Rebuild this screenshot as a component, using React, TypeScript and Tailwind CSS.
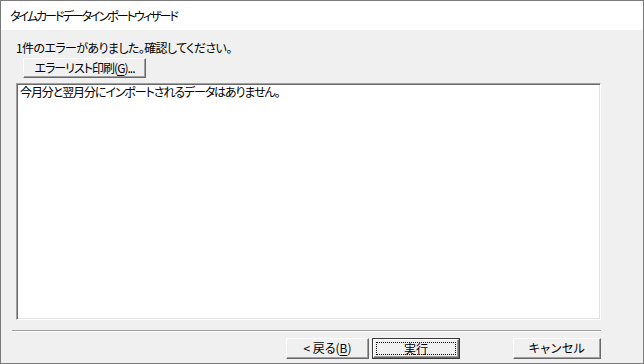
import React from "react";

const font = "font-['Noto_Sans_CJK_JP','Noto_Sans',sans-serif] [font-feature-settings:'palt']";

function Btn({
  children,
  className = "",
  def = false,
}: {
  children: React.ReactNode;
  className?: string;
  def?: boolean;
}) {
  if (def) {
    return (
      <div className={`border border-[#3a3a3a] ${className}`}>
        <div className="h-full w-full border border-t-white border-l-white border-r-[#696969] border-b-[#696969] bg-[#f0f0f0] shadow-[inset_-1px_-1px_0_#a0a0a0] p-[2px]">
          <div className="flex h-full w-full items-center justify-center border border-dotted border-black text-[12px] leading-none text-black">
            {children}
          </div>
        </div>
      </div>
    );
  }
  return (
    <div
      className={`flex items-center justify-center border border-t-white border-l-white border-r-[#696969] border-b-[#696969] bg-[#f0f0f0] shadow-[inset_-1px_-1px_0_#a0a0a0] text-[12px] leading-none text-black ${className}`}
    >
      {children}
    </div>
  );
}

export default function App() {
  return (
    <div className={`flex h-[364px] w-[644px] flex-col border border-[#7a7a7a] bg-[#f0f0f0] text-black ${font}`}>
      <div className="flex h-[29px] shrink-0 items-center bg-white pl-[9px] text-[12px] leading-none tracking-[-2px]">
        タイムカードデータインポートウィザード
      </div>
      <div className="flex flex-1 flex-col pl-[15px] pt-[10px]">
        <div className="h-[16px] text-[12px] leading-[16px] tracking-[-0.6px]">
          1件のエラーがありました。確認してください。
        </div>
        <Btn className="ml-[7px] mt-[2px] h-[20px] w-[123px] pb-[1px] tracking-[-1px]">
          エラーリスト印刷(<span className="underline underline-offset-2">G</span>)...
        </Btn>
        <div className="mt-[5px] h-[237px] w-[585px] border border-t-[#a0a0a0] border-l-[#a0a0a0] border-r-white border-b-white bg-white shadow-[inset_1px_1px_0_#696969,inset_-1px_-1px_0_#e3e3e3] pl-[3px]">
          <div className="text-[12px] leading-[16px] tracking-[-1.1px]">
            今月分と翌月分にインポートされるデータはありません。
          </div>
        </div>
        <div className="ml-[-4px] mt-[10px] h-[2px] w-[589px] border-t border-t-[#a0a0a0] border-b border-b-white" />
        <div className="mt-[6px] flex h-[21px]">
          <Btn className="ml-[270px] w-[83px] pb-[1px]">
            &lt; 戻る(<span className="underline underline-offset-2">B</span>)
          </Btn>
          <Btn def className="ml-[3px] w-[88px]">
            実行
          </Btn>
          <Btn className="ml-[53px] w-[88px] pb-[1px] tracking-[0.5px]">キャンセル</Btn>
        </div>
      </div>
    </div>
  );
}
